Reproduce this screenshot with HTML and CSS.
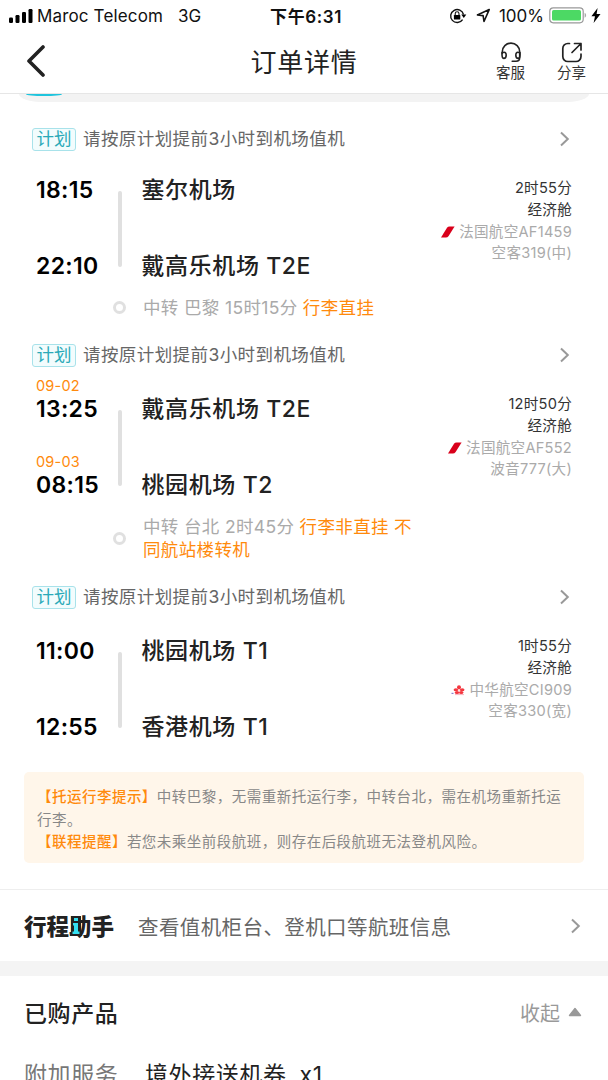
FILE: index.html
```html
<!DOCTYPE html>
<html lang="zh-CN">
<head>
  <meta charset="UTF-8" />
  <title>订单详情</title>
  <meta name="viewport" content="width=device-width, initial-scale=1.0" />
  <link rel="stylesheet" href="styles.css">
</head>
<body>

  <div class="status-bar">
    <div class="status-left">
      <svg class="signal" width="25" height="16" viewBox="0 0 25 16">
        <rect x="0" y="9.5" width="4" height="5.5" rx="1.2" />
        <rect x="6.5" y="7" width="4" height="8" rx="1.2" />
        <rect x="13" y="4" width="4" height="11" rx="1.2" />
        <rect x="19.5" y="1" width="4" height="14" rx="1.2" />
      </svg>
      <span class="carrier">Maroc Telecom</span>
      <span class="network">3G</span>
    </div>
    <div class="clock">下午6:31</div>
    <div class="status-right">
      <svg class="lock" width="18" height="16" viewBox="0 0 18 16">
        <path d="M13.6 11.6A6.5 6.5 0 1 1 14.5 6.5" fill="none" stroke="#111" stroke-width="1.4" />
        <path d="M12.3 6.6h5l-2.5 3.300z" />
        <rect x="4.9" y="7" width="6.4" height="4.6" rx=".6" />
        <path d="M6.2 7V5.7a1.900 1.900 0 0 1 3.800 0V7" fill="none" stroke="#111" stroke-width="1.1" />
      </svg>
      <svg class="arrow" width="15" height="15" viewBox="0 0 15 15">
        <path d="M13.2 1.6L1.4 6.9l5.7.7.9 5.9z" fill="none" stroke="#111" stroke-width="1.6" stroke-linejoin="round" />
      </svg>
      <span class="percent">100%</span>
      <svg class="battery" width="38" height="17" viewBox="0 0 38 17">
        <rect x=".8" y=".8" width="33.4" height="15" rx="3.5" fill="#fff" stroke="#999" stroke-width="1.2" />
        <rect x="3" y="3" width="29" height="10.6" rx="1.6" fill="#4cd964" />
        <path d="M35.6 5.8c2 .8 2 4.200 0 5z" fill="#aaa" />
      </svg>
      <svg class="bolt" width="10" height="15" viewBox="0 0 10 15">
        <path d="M6.6 0L.4 8.300h3.600L2.600 15 9.500 6H5.600z" />
      </svg>
    </div>
  </div>

  <div class="nav">
    <svg class="back" width="20" height="32" viewBox="0 0 20 32">
      <path d="M17 2L3 16l14 14" fill="none" stroke="#222" stroke-width="3.6" stroke-linecap="round" stroke-linejoin="round" />
    </svg>
    <h1>订单详情</h1>
    <div class="nav-actions">
      <div class="nav-btn">
        <svg width="22" height="21" viewBox="0 0 22 21" fill="none" stroke="#222" stroke-width="1.6" stroke-linecap="round">
          <path d="M2.300 11.500V9.800a8.700 8.700 0 0 1 17.400 0v5.700c0 2.200-1.600 3.700-3.700 3.700h-3.800" />
          <path d="M2 10.800c2.600-1.200 4.200-.4 4.200 2.200s-1 3.400-2.400 3.400S1.800 14.800 2 10.800z" />
          <path d="M20 10.800c-2.600-1.200-4.200-.4-4.200 2.200s1 3.400 2.400 3.400 2-1.600 1.800-5.600z" />
        </svg>
        <span>客服</span>
      </div>
      <div class="nav-btn">
        <svg width="22" height="21" viewBox="0 0 22 21" fill="none" stroke="#222" stroke-width="1.7" stroke-linecap="round" stroke-linejoin="round">
          <path d="M8.500 1.500H6.800a5 5 0 0 0-5 5v8a5 5 0 0 0 5 5h8.200a5 5 0 0 0 5-5V12" />
          <path d="M11 10.500l9-9M13.500 1.500H20V8" />
        </svg>
        <span>分享</span>
      </div>
    </div>
  </div>

  <div class="tabs"><div class="tab-active"></div></div>

  <div class="plan">
    <span class="tag">计划</span>
    <span class="plan-text">请按原计划提前3小时到机场值机</span>
    <svg class="chevron" width="11" height="16" viewBox="0 0 11 16"><path d="M2 1.500L8.800 8 2 14.500" /></svg>
  </div>
  <div class="route first">
    <div class="times">
      <div class="stop"><b>18:15</b></div>
      <div class="stop"><b>22:10</b></div>
    </div>
    <div class="line"></div>
    <div class="airports">
      <div class="stop">塞尔机场</div>
      <div class="stop">戴高乐机场 T2E</div>
    </div>
    <div class="info">
      <div>2时55分</div>
      <div>经济舱</div>
      <div class="grey"><svg width="14" height="12" viewBox="0 0 14 12"><path d="M0 11.500L6 1.800Q6.900.5 8.600.5h5L7.600 10q-1 1.500-2.800 1.500z" fill="#d9001b" /></svg>法国航空AF1459</div>
      <div class="grey plane">空客319(中)</div>
    </div>
  </div>
  <div class="transfer">
    <div class="dot"></div>
    <p>中转 巴黎 15时15分 <em>行李直挂</em></p>
  </div>

  <div class="plan">
    <span class="tag">计划</span>
    <span class="plan-text">请按原计划提前3小时到机场值机</span>
    <svg class="chevron" width="11" height="16" viewBox="0 0 11 16"><path d="M2 1.500L8.800 8 2 14.500" /></svg>
  </div>
  <div class="route">
    <div class="times">
      <div class="stop"><i>09-02</i><b>13:25</b></div>
      <div class="stop"><i>09-03</i><b>08:15</b></div>
    </div>
    <div class="line"></div>
    <div class="airports">
      <div class="stop">戴高乐机场 T2E</div>
      <div class="stop">桃园机场 T2</div>
    </div>
    <div class="info">
      <div>12时50分</div>
      <div>经济舱</div>
      <div class="grey"><svg width="14" height="12" viewBox="0 0 14 12"><path d="M0 11.500L6 1.800Q6.900.5 8.600.5h5L7.600 10q-1 1.500-2.800 1.500z" fill="#d9001b" /></svg>法国航空AF552</div>
      <div class="grey plane">波音777(大)</div>
    </div>
  </div>
  <div class="transfer">
    <div class="dot"></div>
    <p>中转 台北 2时45分 <em>行李非直挂 不<br>同航站楼转机</em></p>
  </div>

  <div class="plan">
    <span class="tag">计划</span>
    <span class="plan-text">请按原计划提前3小时到机场值机</span>
    <svg class="chevron" width="11" height="16" viewBox="0 0 11 16"><path d="M2 1.500L8.800 8 2 14.500" /></svg>
  </div>
  <div class="route">
    <div class="times">
      <div class="stop"><b>11:00</b></div>
      <div class="stop"><b>12:55</b></div>
    </div>
    <div class="line"></div>
    <div class="airports">
      <div class="stop">桃园机场 T1</div>
      <div class="stop">香港机场 T1</div>
    </div>
    <div class="info">
      <div>1时55分</div>
      <div>经济舱</div>
      <div class="grey">
        <!-- plum blossom -->
        <svg width="14" height="12" viewBox="0 0 14 12">
          <g fill="#f4373f">
            <ellipse cx="8" cy="3.3" rx="2" ry="2.1" />
            <ellipse cx="4.9" cy="5.7" rx="2.3" ry="1.5" />
            <ellipse cx="11.2" cy="5.7" rx="2.3" ry="1.5" />
            <ellipse cx="6" cy="8.6" rx="2.2" ry="1.5" />
            <ellipse cx="10.2" cy="8.6" rx="2.2" ry="1.5" />
          </g>
          <circle cx="8" cy="6.3" r=".7" fill="#ffc4c6" />
          <path d="M.5 9.400h2" stroke="#8b7fd0" stroke-width="1.2" />
          <path d="M4 10.600h9" stroke="#f4a0b0" stroke-width=".8" />
        </svg>中华航空CI909
      </div>
      <div class="grey plane">空客330(宽)</div>
    </div>
  </div>

  <div class="notice">
    <p><em>【托运行李提示】</em>中转巴黎，无需重新托运行李，中转台北，需在机场重新托运行李。</p>
    <p><em>【联程提醒】</em>若您未乘坐前段航班，则存在后段航班无法登机风险。</p>
  </div>

  <div class="helper">
    <div class="helper-logo">
      行程助手
      <svg class="logo-i" width="12" height="20" viewBox="0 0 12 20">
        <path d="M1 0h10v17h1v3H0v-3h1z" fill="#222" />
        <path d="M4 2h4v3H4zM3 7h5v8.500h1.500V18h-7v-2.500H4v-6H3z" fill="#35e0f0" />
      </svg>
    </div>
    <span class="helper-text">查看值机柜台、登机口等航班信息</span>
    <svg class="chevron" width="11" height="16" viewBox="0 0 11 16"><path d="M2 1.500L8.800 8 2 14.500" /></svg>
  </div>

  <div class="products">
    <div class="products-head">
      <h2>已购产品</h2>
      <span class="fold">收起</span>
      <svg width="14" height="10" viewBox="0 0 14 10"><path d="M7 1.500L12.500 8.500H1.500z" fill="#999" stroke="#999" stroke-width="1.4" stroke-linejoin="round" /></svg>
    </div>
    <div class="product">
      <span class="product-type">附加服务</span>
      <span class="product-name">境外接送机券</span>
      <span class="product-count">x1</span>
    </div>
  </div>

</body>
</html>
```

FILE: styles.css
```css
* {
  box-sizing: border-box;
}

body {
  margin: 0;
  height: 1080px;
  overflow: hidden;
  background: #fff;
  color: #222;
  font-family: Inter, "Noto Sans CJK SC", sans-serif;
}

h1, h2, p {
  margin: 0;
}

em, i {
  font-style: normal;
  color: #ff8a0c;
}

.status-bar {
  display: flex;
  align-items: center;
  justify-content: space-between;
  height: 31px;
  padding: 0 7px 0 9px;
  color: #111;
  font-size: 17px;
}

.status-left,
.status-right {
  display: flex;
  align-items: center;
  width: 240px;
}

.status-right {
  justify-content: flex-end;
}

.signal {
  margin-right: 3px;
}

.carrier {
  letter-spacing: 0.15px;
}

.network {
  margin-left: 15px;
}

.clock {
  padding-left: 2px;
  font-weight: 600;
  letter-spacing: 0.6px;
}

.arrow {
  margin: 0 8px 0 9px;
}

.battery {
  margin: 0 4px 0 5px;
}

.nav {
  display: grid;
  grid-template-columns: 140px 1fr 140px;
  align-items: center;
  height: 63px;
  border-bottom: 1px solid #e6e6e6;
}

.back {
  margin: -3px 0 0 26px;
}

h1 {
  padding-top: 1px;
  text-align: center;
  font-size: 26px;
  font-weight: 400;
  letter-spacing: 0.8px;
  line-height: 60px;
}

.nav-actions {
  display: flex;
  justify-content: flex-end;
  gap: 31px;
  padding: 1px 22px 0 0;
}

.nav-btn {
  display: flex;
  flex-direction: column;
  align-items: center;
  font-size: 14.5px;
  line-height: 20px;
  color: #333;
}

.nav-btn:first-child {
  margin-right: 1px;
}

.tabs {
  height: 8px;
  margin: 0 19px 23px 19px;
  border-radius: 0 0 24px 24px / 0 0 8px 8px;
  background: #f3f3f3;
}

.tab-active {
  width: 36px;
  height: 2px;
  margin-left: 7px;
  border-radius: 0 0 20px 20px / 0 0 2px 2px;
  background: #1fc4dd;
}

.plan {
  display: flex;
  align-items: center;
  height: 28px;
  padding: 0 38px 0 32px;
}

.tag {
  width: 44px;
  height: 23px;
  border: 1px solid #a8e2ea;
  border-radius: 3px;
  background: #f2fcfd;
  color: #2aa9b8;
  font-size: 17.5px;
  line-height: 20px;
  text-align: center;
}

.plan-text {
  flex: 1;
  margin-left: 7px;
  padding-bottom: 3px;
  color: #666;
  font-size: 17.5px;
  letter-spacing: 0.42px;
}

.chevron {
  fill: none;
  stroke: #999;
  stroke-width: 2;
}

.route {
  display: grid;
  grid-template-columns: 82px 24px 1fr 200px;
  height: 130px;
  padding: 8px 36px 0;
}

.route.first {
  height: 127px;
  padding-top: 5px;
}

.stop {
  display: flex;
  flex-direction: column;
  justify-content: flex-end;
  height: 46px;
  margin-bottom: 30px;
}

.stop i {
  font-size: 14.5px;
  line-height: 18px;
  letter-spacing: 0.2px;
}

.stop b {
  color: #000;
  font-size: 23px;
  font-weight: 600;
  line-height: 28px;
  letter-spacing: 0.3px;
}

.line {
  width: 4px;
  height: 76px;
  margin-top: 33px;
  border-radius: 2px;
  background: #e0e0e0;
}

.airports {
  margin-left: -0.5px;
  font-size: 23px;
  font-weight: 500;
  line-height: 28px;
  letter-spacing: 0.6px;
}

.info {
  padding-top: 16px;
  text-align: right;
  font-size: 14.6px;
  line-height: 22px;
  letter-spacing: 0.25px;
  color: #333;
}

.first .info {
  padding-top: 19px;
}

.grey {
  color: #aaa;
}

.grey svg {
  margin-right: 4px;
  vertical-align: -1px;
}

.plane {
  line-height: 20px;
}

.transfer {
  display: flex;
  align-items: center;
  margin: 16px 0 22px;
  padding-left: 113px;
}

.dot {
  width: 13px;
  height: 13px;
  border: 3px solid #e0e0e0;
  border-radius: 50%;
}

.transfer p {
  margin-left: 17px;
  color: #aaa;
  font-size: 17.5px;
  line-height: 23px;
  letter-spacing: 0.35px;
}

.notice {
  height: 91px;
  margin: 31px 24px 26px;
  padding: 14px 14px 0 13px;
  border-radius: 5px;
  background: #fff6ea;
  color: #888;
  font-size: 14.5px;
  line-height: 22.5px;
  letter-spacing: 0.48px;
}

.notice em {
  font-weight: 500;
}

.helper {
  display: flex;
  align-items: center;
  height: 72px;
  padding: 1px 27px 0 24px;
  border-top: 1px solid #eee;
}

.helper-logo {
  position: relative;
  width: 114px;
  padding-bottom: 3px;
  color: #222;
  font-size: 22.5px;
  font-weight: 900;
}

/* cyan "i" sitting inside the third character */
.logo-i {
  position: absolute;
  top: 7px;
  left: 46px;
}

.helper-text {
  flex: 1;
  padding-bottom: 1px;
  color: #666;
  font-size: 20.5px;
  letter-spacing: 0.4px;
}

.products {
  border-top: 15px solid #f4f4f4;
  padding: 18px 26px 0 24px;
}

.products-head {
  display: flex;
  align-items: center;
  height: 36px;
}

h2 {
  flex: 1;
  padding-bottom: 1px;
  font-size: 23px;
  font-weight: 500;
  letter-spacing: 0.6px;
}

.fold {
  margin-right: 8px;
  color: #999;
  font-size: 20px;
}

.product {
  display: flex;
  margin-top: 28px;
  font-size: 23px;
  line-height: 34px;
  letter-spacing: 0.6px;
}

.product-type {
  width: 121px;
  color: #777;
}

.product-count {
  margin-left: 13px;
}
```
